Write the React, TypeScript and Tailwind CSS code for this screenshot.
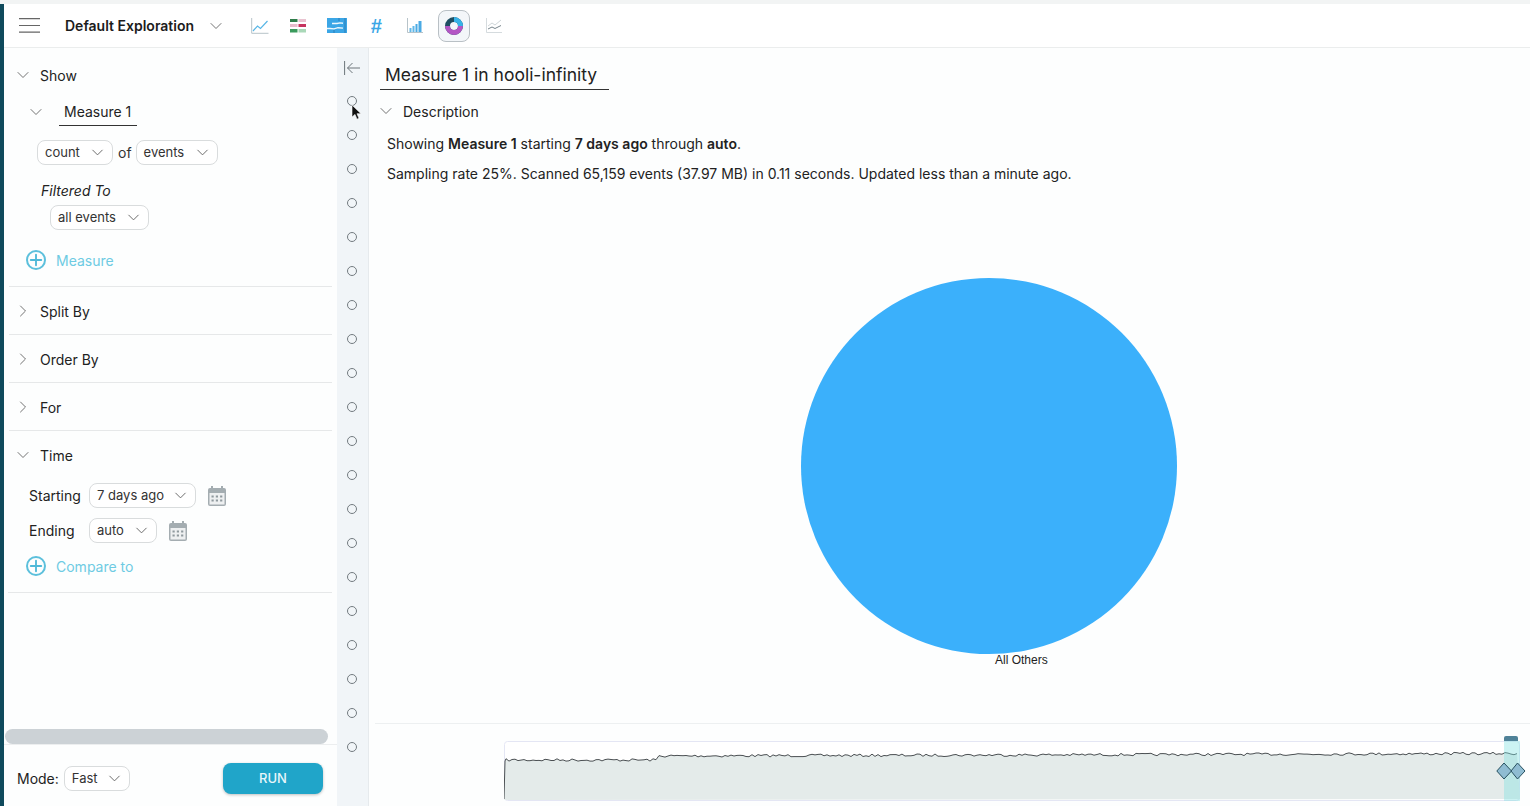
import { ChevronDown, ChevronRight, Plus } from 'lucide-react';

function Select({ label, className = '' }: { label: string; className?: string }) {
  return (
    <div className={`flex h-[25px] items-center justify-between rounded-[8px] border border-[#d9dcdd] bg-white pl-[7px] pr-[5px] text-[13px] text-[#333] ${className}`}>
      <span>{label}</span>
      <ChevronDown className="h-[19px] w-[19px] text-[#666]" strokeWidth={1.2} />
    </div>
  );
}

function Section({ label, open = false }: { label: string; open?: boolean }) {
  return (
    <div className="flex h-[24px] items-center">
      <div className="flex w-[36px] justify-center pl-[2px]">
        {open ? (
          <ChevronDown className="h-[20px] w-[20px] text-[#666]" strokeWidth={1.1} />
        ) : (
          <ChevronRight className="h-[20px] w-[20px] text-[#666]" strokeWidth={1.1} />
        )}
      </div>
      <span className="text-[14px] text-[#222]">{label}</span>
    </div>
  );
}

function AddRow({ label }: { label: string }) {
  return (
    <div className="flex h-[24px] items-center gap-[10px] pl-[22px]">
      <span className="flex h-[20px] w-[20px] items-center justify-center rounded-full border-2 border-[#5cc0dc]">
        <Plus className="h-[18px] w-[18px] shrink-0 text-[#4fb9d8]" strokeWidth={2.5} />
      </span>
      <span className="text-[14px] text-[#6ecbe3]">{label}</span>
    </div>
  );
}

function CalendarIcon() {
  return (
    <svg width="18" height="20" viewBox="0 0 18 20" className="shrink-0">
      <rect x="0" y="2" width="18" height="18" rx="2" fill="#a4adb1" />
      <rect x="3" y="0" width="2" height="4" fill="#a4adb1" />
      <rect x="13" y="0" width="2" height="4" fill="#a4adb1" />
      <rect x="1.5" y="7" width="15" height="11.5" fill="#eef0f1" />
      {[3.5, 7.8, 12.1].map((x) =>
        [9.5, 13.5].map((y) => <rect key={`${x}-${y}`} x={x} y={y} width="2.2" height="2" fill="#8f999e" />),
      )}
    </svg>
  );
}

function ToolbarIcons() {
  return (
    <div className="ml-[25px] flex items-center">
      {/* line */}
      <svg width="18" height="16" viewBox="0 0 18 16" className="mr-[21px]">
        <path d="M.7 0v15.3H17.5" fill="none" stroke="#b7c3c9" strokeWidth="1" />
        <path d="M2 13l4.5-5 3 2.5L16.5 3" fill="none" stroke="#58b6e6" strokeWidth="1.2" />
      </svg>
      {/* table */}
      <svg width="16" height="14" viewBox="0 0 16 14" className="mr-[21px]">
        <rect x="0" y="0" width="7.5" height="3" fill="#2f7d4a" />
        <rect x="8.5" y="0" width="7.5" height="3" fill="#e9c3d0" />
        <rect x="0" y="5" width="7.5" height="3" fill="#e6bccb" />
        <rect x="8.5" y="5" width="7.5" height="3" fill="#c6345f" />
        <rect x="0" y="10" width="7.5" height="3.5" fill="#3a9a5c" />
        <rect x="8.5" y="10" width="7.5" height="3.5" fill="#a9d8b8" />
      </svg>
      {/* heatmap */}
      <svg width="20" height="15" viewBox="0 0 20 15" className="mr-[23px]">
        <rect width="20" height="15" fill="#3ba6e6" />
        <path d="M5 5.5h5l3-.6 3 .4M0 10.5h3l4 .4 4-1.2 5 .4" fill="none" stroke="#eef8fd" strokeWidth="1.4" />
        <path d="M18 0v15M7 12v3M12 0v3" stroke="#2d7fb8" strokeWidth="1" />
      </svg>
      {/* number */}
      <span className="mr-[25px] w-[12px] text-center font-['Liberation_Sans',sans-serif] text-[20px] font-bold italic leading-none text-[#3ba6e6]">#</span>
      {/* bars */}
      <svg width="16" height="15" viewBox="0 0 16 15" className="mr-[15px]">
        <path d="M.5 0v14.5H16" fill="none" stroke="#b7c3c9" strokeWidth="1" />
        <rect x="2.5" y="10" width="2" height="4" fill="#62b8e8" />
        <rect x="5.5" y="8" width="2" height="6" fill="#62b8e8" />
        <rect x="8.5" y="6" width="2" height="8" fill="#4aaae4" />
        <rect x="11.5" y="3" width="3" height="11" fill="#4aaae4" />
      </svg>
      {/* active pie */}
      <div className="mr-[16px] flex h-[32px] w-[32px] items-center justify-center rounded-[8px] border border-[#b9c0c5] bg-[#f3f6f9]">
        <svg width="18" height="18" viewBox="0 0 18 18">
          <circle cx="9" cy="9" r="6.5" fill="none" stroke="#1f4f63" strokeWidth="5" />
          <path d="M9 2.5A6.5 6.5 0 0 1 15.5 9" fill="none" stroke="#35b2e8" strokeWidth="5" />
          <path d="M15.5 9A6.5 6.5 0 0 1 2.5 9" fill="none" stroke="#b356c4" strokeWidth="5" />
        </svg>
      </div>
      {/* area */}
      <svg width="16" height="15" viewBox="0 0 16 15">
        <path d="M.5 0v14.5H16" fill="none" stroke="#d5dbde" strokeWidth="1" />
        <path d="M2 8l4-3 3 2 6-5" fill="none" stroke="#cfd6d9" strokeWidth="1" />
        <path d="M2 11l4-2 3 1.5 6-3" fill="none" stroke="#77858c" strokeWidth="1" />
      </svg>
    </div>
  );
}

function Rail() {
  const dots = Array.from({ length: 20 }, (_, i) => i);
  return (
    <div className="relative flex w-[32px] shrink-0 flex-col items-center border-r border-[#e6eaed] bg-[#f1f5f8] pt-[13px]">
      <svg width="16" height="14" viewBox="0 0 16 14" className="mb-[21px] mr-[1px]">
        <path d="M.6 0v14M16 7H3.5M8.5 2l-5 5 5 5" fill="none" stroke="#6c757a" strokeWidth="1" />
      </svg>
      <div className="mr-[2px] flex flex-col gap-[24px]">
        {dots.map((d) => (
          <span key={d} className="h-[10px] w-[10px] rounded-full border border-[#737b80]" />
        ))}
      </div>
      {/* mouse pointer */}
      <svg width="11" height="17" viewBox="0 0 11 17" className="absolute left-[14px] top-[56px]">
        <path d="M1 1v12l3-2.6 2 4.8 2-.9-2-4.6h4z" fill="#111" stroke="#fff" strokeWidth=".6" />
      </svg>
    </div>
  );
}

// jittery line for the time brush, fixed seed so the photo stays stable
function brushPath() {
  const w = 1016;
  let seed = 7;
  const rand = () => {
    seed = (seed * 16807) % 2147483647;
    return seed / 2147483647;
  };
  const pts: string[] = ['M0 58', 'L1 20'];
  for (let x = 2; x < w; x += 3) {
    const base = x < 155 ? 19 : 15 - ((x - 155) / 861) * 2.5;
    pts.push(`L${x} ${(base + (rand() - 0.5) * 2.6).toFixed(1)}`);
  }
  return pts.join(' ');
}

function TimeBrush() {
  const line = brushPath();
  return (
    <div className="ml-[6px] mt-auto flex h-[83px] shrink-0 border-t border-[#edf0f1] pl-[129px] pt-[17px]">
      <div className="relative h-[60px] w-[1016px] overflow-visible">
        <svg width="1016" height="60" viewBox="0 0 1016 60" className="block">
          <rect x=".5" y=".5" width="1015" height="59" rx="3" fill="#fff" stroke="#e4e6f4" />
          <path d={`${line} L1016 58 L1 59 Z`} fill="#e4ebea" />
          <path d={line} fill="none" stroke="#4a4f52" strokeWidth="1" />
        </svg>
        <div className="absolute bottom-0 right-0 top-0 w-[16px] bg-[#7fe0e0]/40" />
        <div className="absolute right-[2px] top-[-5px] h-[5px] w-[14px] rounded-t-[2px] bg-[#4f8298]" />
        <svg width="30" height="18" viewBox="0 0 30 18" className="absolute right-[-6px] top-[21px]">
          <path d="M8 1l7.5 8L8 17 .8 9z" fill="#8fbcd2" stroke="#27505f" strokeWidth="1" />
          <path d="M21.5 1L29 9l-7.5 8L15 9z" fill="#8fbcd2" stroke="#27505f" strokeWidth="1" />
        </svg>
      </div>
    </div>
  );
}

export default function App() {
  return (
    <div className="flex h-[806px] w-[1530px] flex-col overflow-hidden bg-[#fdfefe] font-['Inter',sans-serif]">
      <div className="h-[4px] shrink-0 bg-[#f2f4f4]" />
      <div className="flex min-h-0 flex-1">
        <div className="w-[4px] shrink-0 bg-[#0f4a5c]" />
        <div className="flex min-w-0 flex-1 flex-col">
          {/* top bar */}
          <div className="flex h-[44px] shrink-0 items-center border-b border-[#ebeded] bg-white pl-[15px]">
            <svg width="21" height="15" viewBox="0 0 21 15">
              <path d="M0 .7h21M0 7.5h21M0 14.2h21" fill="none" stroke="#666" strokeWidth="1.2" />
            </svg>
            <span className="ml-[25px] text-[14px] font-semibold text-[#1c1c1c]">Default Exploration</span>
            <ChevronDown className="ml-[12px] h-[20px] w-[20px] text-[#666]" strokeWidth={1.1} />
            <ToolbarIcons />
          </div>

          <div className="flex min-h-0 flex-1">
            {/* query sidebar */}
            <div className="flex w-[333px] shrink-0 flex-col">
              <div className="flex min-h-0 flex-1 flex-col pt-[15px]">
                <Section label="Show" open />
                <div className="mt-[13px] flex h-[24px] items-center pl-[22px]">
                  <ChevronDown className="h-[20px] w-[20px] text-[#666]" strokeWidth={1.1} />
                  <span className="ml-[13px] w-[78px] border-b border-[#333] pb-[3px] pl-[5px] pt-[3px] text-[14px] text-[#222]">Measure 1</span>
                </div>
                <div className="mt-[16px] flex items-center pl-[33px]">
                  <Select label="count" className="w-[76px]" />
                  <span className="ml-[5px] mr-[4px] text-[14px] text-[#333]">of</span>
                  <Select label="events" className="w-[82px]" />
                </div>
                <span className="mt-[17px] pl-[37px] text-[14px] italic leading-[17px] text-[#222]">Filtered To</span>
                <Select label="all events" className="ml-[46px] mt-[6px] w-[99px]" />
                <div className="mt-[18px]"><AddRow label="Measure" /></div>
                <div className="ml-[5px] mr-[5px] mt-[14px] border-b border-[#e6e8e9]" />
                <div className="mt-[12px]"><Section label="Split By" /></div>
                <div className="ml-[5px] mr-[5px] mt-[11px] border-b border-[#e6e8e9]" />
                <div className="mt-[12px]"><Section label="Order By" /></div>
                <div className="ml-[5px] mr-[5px] mt-[11px] border-b border-[#e6e8e9]" />
                <div className="mt-[12px]"><Section label="For" /></div>
                <div className="ml-[5px] mr-[5px] mt-[11px] border-b border-[#e6e8e9]" />
                <div className="mt-[12px]"><Section label="Time" open /></div>
                <div className="mt-[16px] flex items-center pl-[25px]">
                  <span className="w-[60px] text-[14px] text-[#222]">Starting</span>
                  <Select label="7 days ago" className="w-[107px]" />
                  <span className="ml-[12px]"><CalendarIcon /></span>
                </div>
                <div className="mt-[10px] flex items-center pl-[25px]">
                  <span className="w-[60px] text-[14px] text-[#222]">Ending</span>
                  <Select label="auto" className="w-[68px]" />
                  <span className="ml-[12px]"><CalendarIcon /></span>
                </div>
                <div className="mt-[11px]"><AddRow label="Compare to" /></div>
                <div className="ml-[4px] mr-[5px] mt-[14px] border-b border-[#e6e8e9]" />
                <div className="mb-0 ml-[1px] mt-auto h-[15px] w-[323px] rounded-full bg-[#ccd2d6]" />
              </div>
              <div className="flex h-[62px] shrink-0 items-center justify-between border-t border-[#eceeef] pl-[13px] pr-[14px] pt-[6px]">
                <div className="flex items-center gap-[5px]">
                  <span className="text-[14px] text-[#222]">Mode:</span>
                  <Select label="Fast" className="w-[66px]" />
                </div>
                <button className="h-[31px] w-[100px] rounded-[8px] bg-[#20a5c9] text-[13px] font-medium text-[#e8f6fa] shadow-[0_1px_3px_rgba(0,0,0,0.25)]">RUN</button>
              </div>
            </div>

            <Rail />

            {/* results */}
            <div className="flex min-w-0 flex-1 flex-col">
              <div className="ml-[11px] mt-[14px] w-[229px] border-b border-[#333] px-[5px] pb-[1px] text-[17.5px] leading-[26px] text-[#222]">Measure 1 in hooli-infinity</div>
              <div className="mt-[9px] flex h-[24px] items-center pl-[7px]">
                <ChevronDown className="h-[20px] w-[20px] text-[#666]" strokeWidth={1.1} />
                <span className="ml-[7px] text-[14px] text-[#222]">Description</span>
              </div>
              <p className="ml-[18px] mt-[11px] text-[14px] leading-[20px] text-[#222]">
                Showing <b className="font-semibold">Measure 1</b> starting <b className="font-semibold">7 days ago</b> through <b className="font-semibold">auto</b>.
              </p>
              <p className="ml-[18px] mt-[10px] text-[14px] leading-[20px] text-[#222]">
                Sampling rate 25%. Scanned 65,159 events (37.97 MB) in 0.11 seconds. Updated less than a minute ago.
              </p>
              <div className="ml-[431px] mt-[93px] w-[378px]">
                <svg width="378" height="378" viewBox="0 0 378 378" className="block">
                  <circle cx="189" cy="189" r="188" fill="#3bb0fb" />
                </svg>
                <div className="ml-[195px] mt-[-2px] whitespace-nowrap font-['Liberation_Sans',sans-serif] text-[12px] leading-[14px] text-[#222]">All Others</div>
              </div>
              <TimeBrush />
            </div>
          </div>
        </div>
      </div>
    </div>
  );
}
